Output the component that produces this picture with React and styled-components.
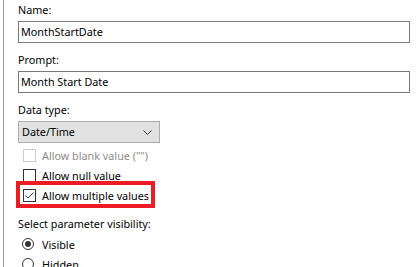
import React from "react";
import styled, { createGlobalStyle } from "styled-components";

const Global = createGlobalStyle`
  html, body { margin: 0; padding: 0; background: #ffffff; }
  body {
    font-family: "Segoe UI", "Noto Sans", "Open Sans", sans-serif;
    font-size: 10.8px;
    color: #000000;
    overflow: hidden;
  }
`;

const Frame = styled.div`
  margin-left: 3px;
  border-left: 1px solid #a0a0a0;
  height: 267px;
  box-sizing: border-box;
  padding: 2px 7px 0 14px;
  display: flex;
  flex-direction: column;
`;

const Field = styled.div`
  display: flex;
  flex-direction: column;
  gap: 3px;
  margin-bottom: 9px;
`;

const Label = styled.div`
  height: 16px;
  line-height: 16px;
  white-space: nowrap;
`;

const TextBox = styled.div`
  box-sizing: border-box;
  height: 22px;
  width: 392px;
  border: 1px solid #7a7a7a;
  background: #ffffff;
  padding: 0 2px;
  line-height: 20px;
  white-space: nowrap;
`;

const Select = styled.div`
  box-sizing: border-box;
  height: 22px;
  width: 142px;
  border: 1px solid #adadad;
  background: #e1e1e1;
  padding: 0 7px 0 3px;
  line-height: 20px;
  display: flex;
  align-items: center;
  justify-content: space-between;
`;

const Checks = styled.div`
  display: flex;
  flex-direction: column;
  margin-top: -7px;
  padding-left: 5px;
`;

const CheckRow = styled.div`
  position: relative;
  height: 20px;
  display: flex;
  align-items: center;
  gap: 6px;
  color: ${(p) => (p.$disabled ? "#8c8c8c" : "#000000")};
  white-space: nowrap;
  align-self: flex-start;
`;

const Highlight = styled.div`
  position: absolute;
  left: -7px;
  top: -4px;
  right: -6px;
  bottom: -3px;
  border: 4px solid #ed1c24;
  pointer-events: none;
`;

const Box = styled.span`
  box-sizing: border-box;
  width: 13px;
  height: 13px;
  border: 1px solid ${(p) => (p.$disabled ? "#cccccc" : "#333333")};
  background: #ffffff;
  display: flex;
  align-items: center;
  justify-content: center;
  flex: none;
`;

const Section = styled.div`
  margin-top: 11px;
`;

const Radios = styled.div`
  display: flex;
  flex-direction: column;
  padding-left: 4px;
  margin-top: 2px;
`;

const RadioRow = styled.div`
  height: 20px;
  display: flex;
  align-items: center;
  gap: 8px;
  white-space: nowrap;
`;

const Circle = styled.span`
  box-sizing: border-box;
  width: 12px;
  height: 12px;
  border-radius: 50%;
  border: 1px solid #333333;
  background: #ffffff;
  display: flex;
  align-items: center;
  justify-content: center;
  flex: none;
`;

const Dot = styled.span`
  width: 6px;
  height: 6px;
  border-radius: 50%;
  background: #333333;
`;

function Check({ checked, disabled, label, highlight }) {
  return (
    <CheckRow $disabled={disabled}>
      <Box $disabled={disabled}>
        {checked && (
          <svg width="11" height="11" viewBox="0 0 11 11">
            <path d="M1.5 5.5 L4 8 L9.5 2.5" fill="none" stroke="#333333" strokeWidth="1" />
          </svg>
        )}
      </Box>
      <span>{label}</span>
      {highlight && <Highlight />}
    </CheckRow>
  );
}

function Radio({ checked, label }) {
  return (
    <RadioRow>
      <Circle>{checked && <Dot />}</Circle>
      <span>{label}</span>
    </RadioRow>
  );
}

export default function App() {
  return (
    <>
      <Global />
      <Frame>
        <Field>
          <Label>Name:</Label>
          <TextBox>MonthStartDate</TextBox>
        </Field>
        <Field>
          <Label>Prompt:</Label>
          <TextBox>Month Start Date</TextBox>
        </Field>
        <Field>
          <Label>Data type:</Label>
          <Select>
            <span>Date/Time</span>
            <svg width="9" height="5" viewBox="0 0 9 5">
              <path d="M0.5 0.5 L4.5 4.5 L8.5 0.5" fill="none" stroke="#333333" strokeWidth="1" />
            </svg>
          </Select>
        </Field>
        <Checks>
          <Check disabled label={'Allow blank value ("")'} />
          <Check label="Allow null value" />
          <Check checked highlight label="Allow multiple values" />
        </Checks>
        <Section>
          <Label>Select parameter visibility:</Label>
          <Radios>
            <Radio checked label="Visible" />
            <Radio label="Hidden" />
          </Radios>
        </Section>
      </Frame>
    </>
  );
}
